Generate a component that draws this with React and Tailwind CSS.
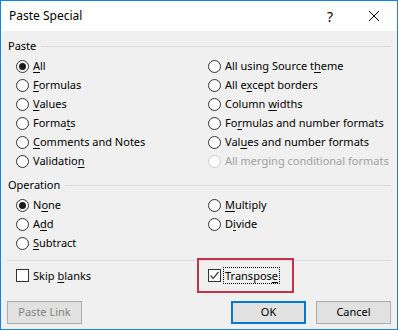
const font = { fontFamily: '"Noto Sans", "Open Sans", sans-serif' };

const pasteLeft = [
  { label: ['', 'A', 'll'], checked: true },
  { label: ['', 'F', 'ormulas'] },
  { label: ['', 'V', 'alues'] },
  { label: ['Forma', 't', 's'] },
  { label: ['', 'C', 'omments and Notes'] },
  { label: ['Validatio', 'n', ''] },
];

const pasteRight = [
  { label: ['All using Source t', 'h', 'eme'] },
  { label: ['All e', 'x', 'cept borders'] },
  { label: ['Column ', 'w', 'idths'] },
  { label: ['Fo', 'r', 'mulas and number formats'] },
  { label: ['Val', 'u', 'es and number formats'] },
  { label: ['All merging conditional formats', '', ''], disabled: true },
];

const Label = ({ parts }) => (
  <span className="whitespace-nowrap">
    {parts[0]}
    {parts[1] && <u className="underline-offset-2">{parts[1]}</u>}
    {parts[2]}
  </span>
);

const Radio = ({ label, checked, disabled }) => (
  <div className="h-[19px] flex items-center gap-[4px]">
    <span
      className={`w-[13px] h-[13px] rounded-full border bg-white flex items-center justify-center shrink-0 ${
        disabled ? 'border-[#cccccc]' : 'border-[#333333]'
      }`}
    >
      {checked && <span className="w-[7px] h-[7px] rounded-full bg-[#1a1a1a]" />}
    </span>
    <span className={disabled ? 'text-[#a0a0a0]' : 'text-black'}>
      <Label parts={label} />
    </span>
  </div>
);

const Checkbox = ({ label, checked, focused }) => (
  <div className="h-[19px] flex items-center gap-[2px]">
    <span className="w-[13px] h-[13px] border border-[#333333] bg-white flex items-center justify-center shrink-0">
      {checked && (
        <svg width="11" height="11" viewBox="0 0 11 11">
          <path d="M1.5 5.5 L4.2 8.3 L9.5 2" fill="none" stroke="#333" strokeWidth="1.2" />
        </svg>
      )}
    </span>
    <span className={`px-[1px] ml-[1px] leading-[15px] ${focused ? 'outline outline-1 outline-dotted outline-black' : ''}`}>
      <Label parts={label} />
    </span>
  </div>
);

const GroupHeader = ({ title }) => (
  <div className="h-[14px] flex items-center">
    <span className="pl-[1px]">{title}</span>
    <div className="flex-1 h-px bg-[#dcdcdc] ml-[5px]" />
  </div>
);

export default function App() {
  return (
    <div
      className="w-[398px] h-[330px] border border-[#1883d7] bg-[#f0f0f0] flex flex-col text-[11px] text-black relative"
      style={font}
    >
      {/* Title bar */}
      <div className="h-[30px] bg-white flex items-center pl-[8px] shrink-0 text-[12px]">
        <span className="flex-1">Paste Special</span>
        <span className="w-[46px] text-center text-[14px] mr-[-2px]">?</span>
        <span className="w-[46px] flex justify-center">
          <svg width="12" height="12" viewBox="0 0 12 12">
            <path d="M1 1 L11 11 M11 1 L1 11" stroke="#000" strokeWidth="1" />
          </svg>
        </span>
      </div>

      <div className="flex flex-col px-[6px] pt-[8px]">
        <GroupHeader title="Paste" />
        <div className="grid grid-cols-[192px_1fr] pl-[9px] mt-[4px]">
          <div className="flex flex-col">
            {pasteLeft.map((r, i) => (
              <Radio key={i} {...r} />
            ))}
          </div>
          <div className="flex flex-col">
            {pasteRight.map((r, i) => (
              <Radio key={i} {...r} />
            ))}
          </div>
        </div>

        <div className="mt-[7px]">
          <GroupHeader title="Operation" />
        </div>
        <div className="grid grid-cols-[192px_1fr] pl-[9px] mt-[4px]">
          <div className="flex flex-col">
            <Radio label={['N', 'o', 'ne']} checked />
            <Radio label={['A', 'd', 'd']} />
            <Radio label={['', 'S', 'ubtract']} />
          </div>
          <div className="flex flex-col">
            <Radio label={['', 'M', 'ultiply']} />
            <Radio label={['D', 'i', 'vide']} />
          </div>
        </div>

        <div className="h-px bg-[#dcdcdc] mt-[7px]" />

        <div className="grid grid-cols-[192px_1fr] pl-[9px] mt-[5px]">
          <Checkbox label={['Skip ', 'b', 'lanks']} />
          <Checkbox label={['Transpos', 'e', '']} checked focused />
        </div>

        <div className="flex items-center mt-[16px]">
          <button className="w-[75px] h-[23px] bg-[#e1e1e1] border border-[#adadad] text-[#838383]">
            Paste Link
          </button>
          <div className="flex-1" />
          <button className="w-[75px] h-[23px] bg-[#e1e1e1] border-2 border-[#0078d7]">OK</button>
          <button className="w-[75px] h-[23px] bg-[#e1e1e1] border border-[#adadad] ml-[10px]">Cancel</button>
        </div>
      </div>

      {/* annotation highlight around Transpose */}
      <div className="absolute left-[196px] top-[257px] w-[97px] h-[35px] border-2 border-[#c4314b] pointer-events-none" />
    </div>
  );
}
